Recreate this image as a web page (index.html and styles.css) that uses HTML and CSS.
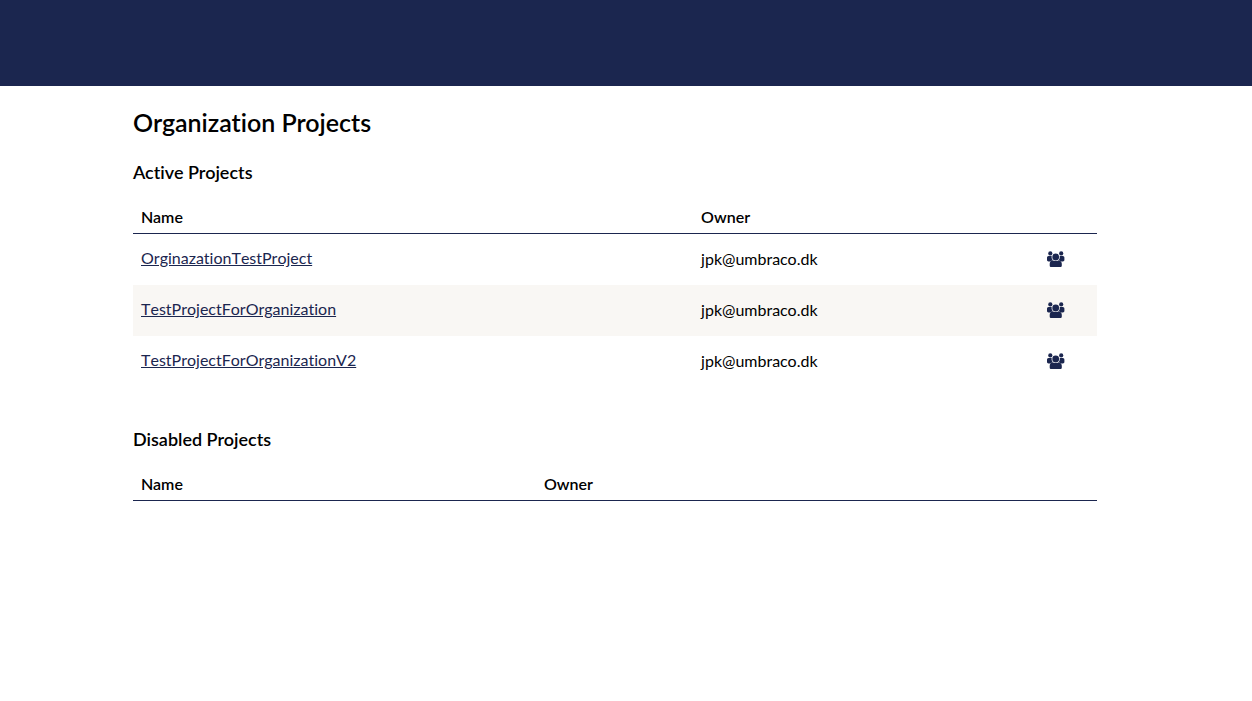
FILE: index.html
```html
<!DOCTYPE html>
<html lang="en">
<head>
<meta charset="utf-8">
<meta name="viewport" content="width=device-width, initial-scale=1">
<title>Organization Projects</title>
<link rel="stylesheet" href="styles.css">
</head>
<body>
<svg class="sprite" aria-hidden="true">
  <symbol id="group" viewBox="0 0 18 16">
    <circle cx="3.300" cy="2.400" r="2.100"/>
    <circle cx="14.200" cy="2.400" r="2.100"/>
    <circle cx="8.700" cy="6" r="3.400"/>
    <path d="M1.600 5h3.100c-.3 1.700.1 3 1 4-.8.400-1.500.9-2.100 1.500H1.500C.6 10.500 0 10 0 9.100V6.800C0 5.700.6 5 1.600 5z"/>
    <path d="M15.800 5h-3.100c.3 1.700-.1 3-1 4 .8.400 1.500.9 2.100 1.500h2.100c.9 0 1.500-.5 1.500-1.400V6.800c0-1.100-.6-1.800-1.600-1.800z"/>
    <path d="M5.700 9.200c1.900 1.200 4.100 1.200 6 0 1.800.3 3.100 1.800 3.100 3.600v1.600c0 1-.6 1.600-1.600 1.600H4.300c-1 0-1.600-.6-1.600-1.600v-1.600c0-1.800 1.200-3.300 3-3.600z"/>
  </symbol>
</svg>
<header class="topbar"></header>
<main class="content">
  <h1 class="title">Organization Projects</h1>
  <section class="section">
    <h2 class="subtitle">Active Projects</h2>
    <table class="projects projects-active">
      <colgroup><col class="col-name"><col class="col-owner"><col></colgroup>
      <thead><tr><th scope="col">Name</th><th scope="col">Owner</th><th></th></tr></thead>
      <tbody>
        <tr><td><a href="#">OrginazationTestProject</a></td><td class="owner">jpk@umbraco.dk</td><td class="actions"><a href="#" aria-label="Team"><svg class="icon"><use href="#group"/></svg></a></td></tr>
        <tr><td><a href="#">TestProjectForOrganization</a></td><td class="owner">jpk@umbraco.dk</td><td class="actions"><a href="#" aria-label="Team"><svg class="icon"><use href="#group"/></svg></a></td></tr>
        <tr><td><a href="#">TestProjectForOrganizationV2</a></td><td class="owner">jpk@umbraco.dk</td><td class="actions"><a href="#" aria-label="Team"><svg class="icon"><use href="#group"/></svg></a></td></tr>
      </tbody>
    </table>
  </section>
  <section class="section">
    <h2 class="subtitle">Disabled Projects</h2>
    <table class="projects projects-disabled">
      <colgroup><col class="col-name"><col class="col-owner"><col></colgroup>
      <thead><tr><th scope="col">Name</th><th scope="col">Owner</th><th></th></tr></thead>
    </table>
  </section>
</main>
</body>
</html>
```
FILE: styles.css
```css
body {
  margin: 0;
  background: #fff;
  color: #000;
  font: 16px/24px Lato, sans-serif;
  font-variant-ligatures: none;
}
.sprite {
  display: none;
}
.topbar {
  height: 86px;
  background: #1b264f;
}
.content {
  padding: 20px 155px 20px 133px;
}
.title {
  margin: 0 0 22px;
  font-size: 25px;
  line-height: 32px;
  font-weight: 600;
}
.section {
  margin-bottom: 40px;
}
.subtitle {
  margin: 0 0 18px;
  font-size: 18px;
  line-height: 24px;
  font-weight: 600;
}
.projects {
  width: 100%;
  table-layout: fixed;
  border-collapse: separate;
  border-spacing: 0;
}
.projects-active .col-name {
  width: 58.1%;
}
.projects-active .col-owner {
  width: 35.9%;
}
.projects-disabled .col-name {
  width: 41.8%;
}
.projects-disabled .col-owner {
  width: 41.8%;
}
.projects th {
  height: 24px;
  padding: 3px 8px 4px;
  border-bottom: 1px solid #1b264f;
  text-align: left;
  font-weight: 600;
}
.projects td {
  height: 24px;
  padding: 12px 8px 15px;
  vertical-align: top;
}
.projects .owner {
  padding: 13px 8px 14px;
}
.projects tbody tr:nth-child(even) {
  background: #f9f7f4;
}
.projects a {
  color: #1b264f;
  font-kerning: none;
}
.projects .actions {
  padding: 17px 8px 10px;
}
.actions a {
  display: block;
  width: 18px;
}
.icon {
  display: block;
  width: 18px;
  height: 16px;
  fill: #1b264f;
}
```
